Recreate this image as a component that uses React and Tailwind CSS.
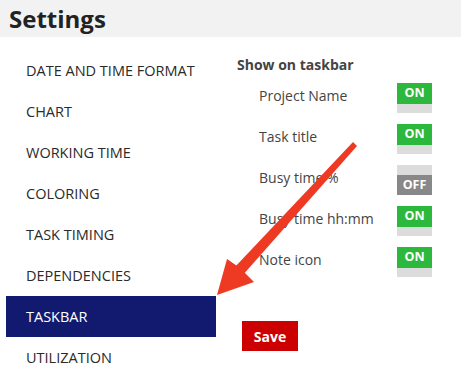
const menu = [
  'DATE AND TIME FORMAT',
  'CHART',
  'WORKING TIME',
  'COLORING',
  'TASK TIMING',
  'DEPENDENCIES',
  'TASKBAR',
  'UTILIZATION',
];

const options = [
  { label: 'Project Name', on: true },
  { label: 'Task title', on: true },
  { label: 'Busy time %', on: false },
  { label: 'Busy time hh:mm', on: true },
  { label: 'Note icon', on: true },
];

const Toggle = ({ on }) =>
  on ? (
    <div className="flex w-[35px] flex-col">
      <div className="flex h-[21px] items-center justify-center bg-[#2bb83c] text-[12.5px] font-bold text-white">ON</div>
      <div className="h-[9px] bg-[#dcdcdc]" />
    </div>
  ) : (
    <div className="flex w-[35px] flex-col">
      <div className="h-[10px] bg-[#dcdcdc]" />
      <div className="flex h-[20px] items-center justify-center bg-[#888888] text-[12.5px] font-bold text-white">OFF</div>
    </div>
  );

const App = () => {
  return (
    <div className="relative h-[378px] w-[461px] overflow-hidden bg-white font-['Open_Sans',sans-serif] text-[#2a2a2a]">
      <div className="flex h-[37px] items-center bg-[#f2f2f2] pl-[9px] text-[24px] font-bold text-[#222]">
        Settings
      </div>

      <div className="flex">
        <div className="ml-[6px] mt-[13px] w-[210px]">
          {menu.map((item) => (
            <div
              key={item}
              className={
                'flex h-[41px] items-center pl-[20px] text-[14.5px] ' +
                (item === 'TASKBAR' ? 'bg-[#111a6e] text-white' : '')
              }
            >
              {item}
            </div>
          ))}
        </div>

        <div className="ml-[21px] mt-[18px] text-[#444]">
          <div className="text-[14px] font-bold leading-[20px]">Show on taskbar</div>
          <div className="mt-[8px]">
            {options.map((o) => (
              <div key={o.label} className="flex h-[41px] items-start">
                <div className="w-[160px] pl-[22px] text-[14px] leading-[26px]">{o.label}</div>
                <Toggle on={o.on} />
              </div>
            ))}
          </div>
          <button className="ml-[5px] mt-[33px] flex h-[30px] w-[56px] items-center justify-center bg-[#cc0000] text-[14px] font-bold text-white">
            Save
          </button>
        </div>
      </div>

      {/* red callout arrow */}
      <svg className="pointer-events-none absolute left-0 top-0" width="461" height="378">
        <polygon points="353,142 357,146 242,276 234,268" fill="#ee3a22" />
        <polygon points="217,295 227,259 240,268 254,282" fill="#ee3a22" />
      </svg>
    </div>
  );
};

export default App;
